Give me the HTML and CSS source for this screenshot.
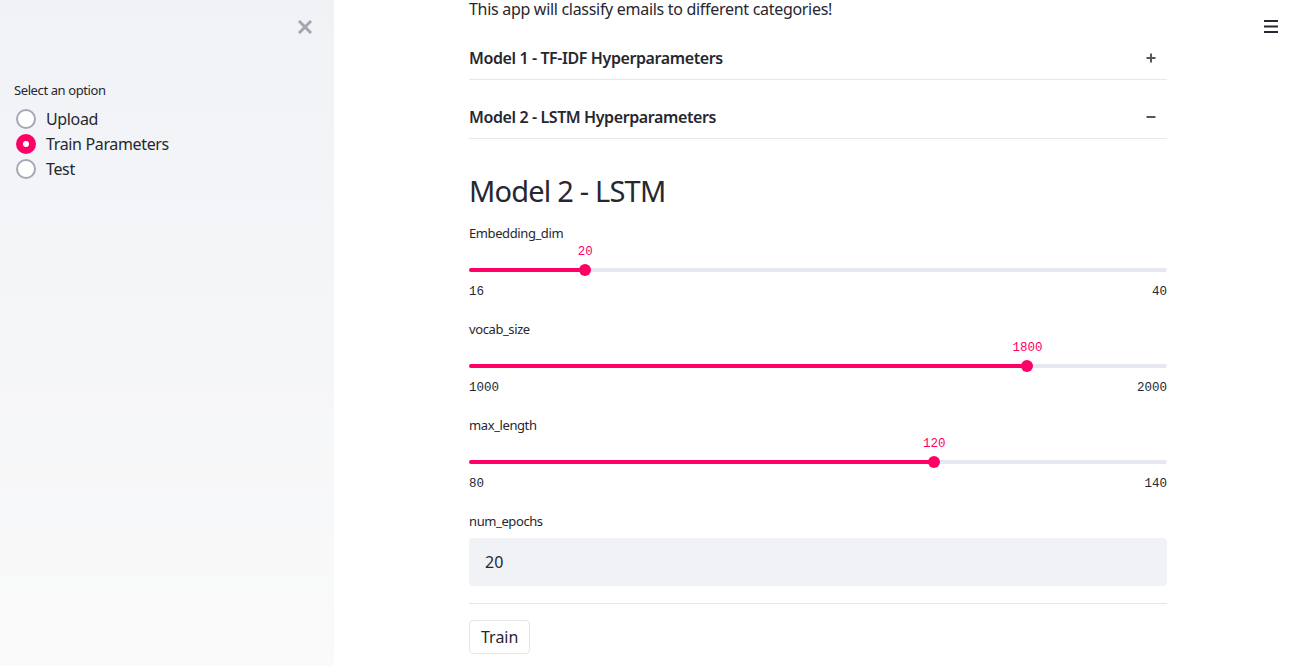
FILE: index.html
```html
<!DOCTYPE html>
<html lang="en">
<head>
<meta charset="utf-8">
<title>Email classifier</title>
<link rel="stylesheet" href="styles.css">
</head>
<body>
<aside class="sidebar">
  <div class="sidebar-top">
    <button class="close-btn" aria-label="Close sidebar">
      <svg width="14" height="14" viewBox="0 0 14 14"><path d="M2 2 L12 12 M12 2 L2 12" stroke="#a3a6b0" stroke-width="3" stroke-linecap="square"/></svg>
    </button>
  </div>
  <div class="radio-group">
    <div class="widget-label">Select an option</div>
    <label class="radio"><span class="radio-dot"></span><span>Upload</span></label>
    <label class="radio checked"><span class="radio-dot"></span><span>Train Parameters</span></label>
    <label class="radio"><span class="radio-dot"></span><span>Test</span></label>
  </div>
</aside>
<main class="main">
  <button class="menu-btn" aria-label="Menu">
    <svg width="16" height="14" viewBox="0 0 16 14"><path d="M1 2 H15 M1 7.5 H15 M1 13 H15" stroke="#262730" stroke-width="2"/></svg>
  </button>
  <div class="content">
    <p class="intro">This app will classify emails to different categories!</p>
    <div class="expander">
      <span>Model 1 - TF-IDF Hyperparameters</span>
      <svg width="12" height="12" viewBox="0 0 12 12"><path d="M6 1.5 V10.5 M1.5 6 H10.5" stroke="#55565f" stroke-width="2"/></svg>
    </div>
    <div class="expander">
      <span>Model 2 - LSTM Hyperparameters</span>
      <svg width="12" height="12" viewBox="0 0 12 12"><path d="M1.5 6 H10.5" stroke="#55565f" stroke-width="2"/></svg>
    </div>
    <h2 class="title">Model 2 - LSTM</h2>

    <div class="slider-block">
      <div class="widget-label">Embedding_dim</div>
      <div class="slider">
        <div class="slider-value" style="left:16.667%">20</div>
        <div class="track"><div class="fill" style="width:16.667%"></div></div>
        <div class="thumb" style="left:16.667%"></div>
      </div>
      <div class="minmax"><span>16</span><span>40</span></div>
    </div>

    <div class="slider-block">
      <div class="widget-label">vocab_size</div>
      <div class="slider">
        <div class="slider-value" style="left:80%">1800</div>
        <div class="track"><div class="fill" style="width:80%"></div></div>
        <div class="thumb" style="left:80%"></div>
      </div>
      <div class="minmax"><span>1000</span><span>2000</span></div>
    </div>

    <div class="slider-block">
      <div class="widget-label">max_length</div>
      <div class="slider">
        <div class="slider-value" style="left:66.667%">120</div>
        <div class="track"><div class="fill" style="width:66.667%"></div></div>
        <div class="thumb" style="left:66.667%"></div>
      </div>
      <div class="minmax"><span>80</span><span>140</span></div>
    </div>

    <div class="input-block">
      <div class="widget-label">num_epochs</div>
      <div class="text-input">20</div>
    </div>
    <hr class="divider">
    <button class="btn">Train</button>
  </div>
</main>
</body>
</html>
```

FILE: styles.css
```css
* { box-sizing: border-box; }
html, body { margin: 0; padding: 0; height: 100%; overflow: hidden; }
body {
  display: flex;
  font-family: "Noto Sans", "Open Sans", sans-serif;
  color: #262730;
  background: #fff;
}
.sidebar {
  width: 334px;
  flex: none;
  height: 666px;
  background: linear-gradient(180deg, #f0f2f6 0%, #fafafa 100%);
  padding: 0 14px;
}
.sidebar-top {
  display: flex;
  justify-content: flex-end;
  padding-top: 20px;
  padding-right: 8px;
  height: 82px;
}
.close-btn {
  border: none; background: none; padding: 0; width: 14px; height: 14px; cursor: pointer;
  display: flex;
}
.widget-label {
  font-size: 13px;
  line-height: 16px;
  color: #262730;
  letter-spacing: -0.4px;
}
.radio-group .widget-label { margin-bottom: 8px; }
.radio {
  display: flex;
  align-items: center;
  gap: 10px;
  height: 25px;
  font-size: 16px;
  padding-left: 2px;
  letter-spacing: -0.35px;
}
.radio-dot {
  width: 20px; height: 20px;
  border-radius: 50%;
  border: 2px solid #a5a8b6;
  background: #fff;
  flex: none;
}
.radio.checked .radio-dot {
  border: 7px solid #ff0066;
  background: #fff;
}
.main {
  flex: 1;
  position: relative;
  height: 666px;
}
.menu-btn {
  position: absolute;
  top: 19px;
  right: 21px;
  border: none; background: none; padding: 0; display: flex;
}
.content {
  width: 698px;
  margin: 0 0 0 calc(50% - 348px);
}
.intro {
  margin: -3px 0 0;
  font-size: 16px;
  line-height: 24px;
  letter-spacing: -0.3px;
}
.expander {
  margin-top: 16px;
  display: flex;
  justify-content: space-between;
  align-items: center;
  padding: 9px 10px 9px 0;
  border-bottom: 1px solid #e6e8ef;
  font-size: 16px;
  line-height: 24px;
  font-weight: 600;
  letter-spacing: -0.4px;
}
.title {
  margin: 32px 0 0;
  font-size: 29px;
  line-height: 40px;
  font-weight: 400;
  letter-spacing: -0.8px;
}
.slider-block { margin-top: 14px; }
.slider-block + .slider-block, .slider-block + .input-block { margin-top: 21px; }
.slider {
  position: relative;
  padding-top: 18px;
  height: 37px;
}
.slider-value {
  position: absolute;
  top: 3px;
  transform: translateX(-50%);
  font-family: "Liberation Mono", "DejaVu Sans Mono", monospace;
  font-size: 12.5px;
  line-height: 16px;
  color: #ff0066;
}
.track {
  margin-top: 9px;
  height: 4px;
  border-radius: 2px;
  background: #e6e8ef;
}
.fill {
  height: 4px;
  border-radius: 2px;
  background: #ff0066;
}
.thumb {
  position: absolute;
  top: 23px;
  width: 12px; height: 12px;
  margin-left: -6px;
  border-radius: 50%;
  background: #ff0066;
}
.minmax {
  display: flex;
  justify-content: space-between;
  margin-top: 6px;
  font-family: "Liberation Mono", "DejaVu Sans Mono", monospace;
  font-size: 12.5px;
  line-height: 16px;
  color: #262730;
}
.text-input {
  margin-top: 9px;
  height: 48px;
  border-radius: 4px;
  background: #f0f2f6;
  padding: 0 16px;
  display: flex;
  align-items: center;
  font-size: 16px;
}
.divider {
  margin: 17px 0 0;
  border: none;
  border-top: 1px solid #e6e6ea;
}
.btn {
  margin-top: 16px;
  font-family: inherit;
  font-size: 16px;
  line-height: 24px;
  color: #262730;
  background: #fff;
  border: 1px solid #e6e6ea;
  border-radius: 4px;
  padding: 4px 11px;
}
```
